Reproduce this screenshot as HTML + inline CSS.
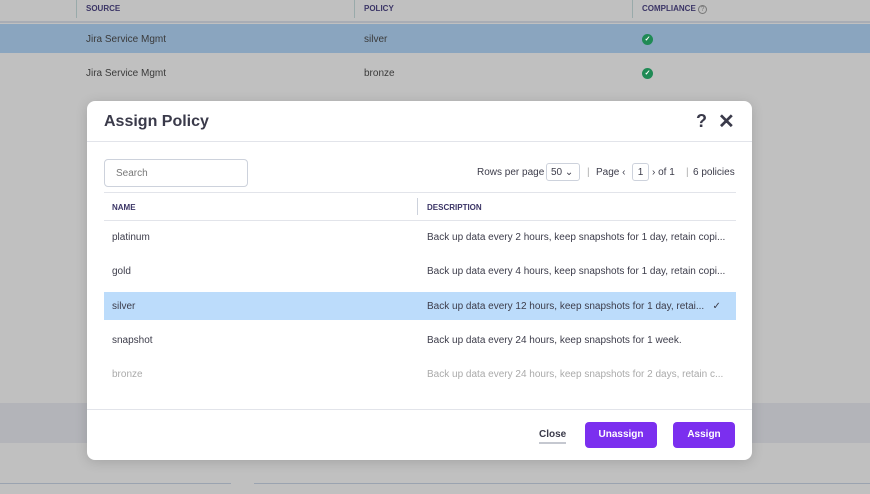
<!DOCTYPE html>
<html><head><style>
*{box-sizing:border-box;margin:0;padding:0}
body{width:870px;height:494px;background:#c0c0c0;font-family:"Liberation Sans",sans-serif;position:relative;overflow:hidden;color:#333}
.a{position:absolute}
.bg{font-size:10px;color:#3a3a3a}
.hd{font-size:8px;font-weight:bold;color:#3b3566}
.ok{width:11px;height:11px;border-radius:50%;background:#1f8a55;color:#fff;font-size:7px;text-align:center;line-height:11px;font-weight:bold}
.m{left:87px;top:101px;width:665px;height:359px;background:#fff;border-radius:8px;box-shadow:0 2px 12px rgba(0,0,0,.15)}
.t{font-size:10px;color:#3c3c4a}
.btn{background:#7b2fef;color:#fff;font-weight:bold;font-size:10px;border-radius:4px;text-align:center;line-height:26px;height:26px}
</style></head><body>
<div class="a" style="left:76px;top:0;width:1px;height:18px;background:#9aa"></div>
<div class="a" style="left:354px;top:0;width:1px;height:18px;background:#9aa"></div>
<div class="a" style="left:632px;top:0;width:1px;height:18px;background:#9aa"></div>
<div class="a hd" style="left:86px;top:4px">SOURCE</div>
<div class="a hd" style="left:364px;top:4px">POLICY</div>
<div class="a hd" style="left:642px;top:4px">COMPLIANCE <span style="font-weight:normal;border:1px solid #777;border-radius:50%;display:inline-block;width:9px;height:9px;font-size:7px;text-align:center;line-height:8px;color:#777">?</span></div>
<div class="a" style="left:0;top:21px;width:870px;height:2px;background:#a9adb5"></div>
<div class="a" style="left:0;top:24px;width:870px;height:29px;background:#8aa5bf"></div>
<div class="a bg" style="left:86px;top:34px">Jira Service Mgmt</div>
<div class="a bg" style="left:364px;top:34px">silver</div>
<div class="a ok" style="left:642px;top:34px">✓</div>
<div class="a bg" style="left:86px;top:68px">Jira Service Mgmt</div>
<div class="a bg" style="left:364px;top:68px">bronze</div>
<div class="a ok" style="left:642px;top:68px">✓</div>
<div class="a" style="left:0;top:403px;width:870px;height:40px;background:#b3b4b9"></div>
<div class="a" style="left:0;top:483px;width:231px;height:1px;background:#9aa3b0"></div>
<div class="a" style="left:254px;top:483px;width:616px;height:1px;background:#9aa3b0"></div>

<div class="a m">
 <div class="a" style="left:17px;top:12px;font-size:16px;font-weight:bold;color:#3a3a4a">Assign Policy</div>
 <div class="a" style="left:609px;top:10px;font-size:18px;font-weight:bold;color:#3a3a4a">?</div>
 <div class="a" style="left:631px;top:8px;font-size:20px;font-weight:bold;color:#3a3a4a">✕</div>
 <div class="a" style="left:0;top:40px;width:665px;height:1px;background:#e2e4ea"></div>
 <div class="a" style="left:17px;top:58px;width:144px;height:28px;border:1px solid #cdd2dc;border-radius:4px;font-size:10px;color:#777;padding:8px 11px">Search</div>
 <div class="a t" style="left:390px;top:66px">Rows per page</div>
 <div class="a t" style="left:459px;top:62px;width:34px;height:18px;border:1px solid #cdd2dc;border-radius:3px;padding:3px 4px">50 ⌄</div>
 <div class="a t" style="left:500px;top:66px;color:#aaa">|</div>
 <div class="a t" style="left:509px;top:66px">Page ‹</div>
 <div class="a t" style="left:545px;top:62px;width:17px;height:18px;border:1px solid #cdd2dc;border-radius:3px;text-align:center;padding-top:3px">1</div>
 <div class="a t" style="left:565px;top:66px">› of 1</div>
 <div class="a t" style="left:599px;top:66px;color:#aaa">|</div>
 <div class="a t" style="left:606px;top:66px">6 policies</div>
 <div class="a" style="left:17px;top:91px;width:632px;height:1px;background:#e2e4ea"></div>
 <div class="a" style="left:330px;top:97px;width:1px;height:17px;background:#cdd2dc"></div>
 <div class="a hd" style="left:25px;top:102px">NAME</div>
 <div class="a hd" style="left:340px;top:102px">DESCRIPTION</div>
 <div class="a" style="left:17px;top:119px;width:632px;height:1px;background:#e2e4ea"></div>
 <div class="a t" style="left:25px;top:131px">platinum</div>
 <div class="a t" style="left:340px;top:131px">Back up data every 2 hours, keep snapshots for 1 day, retain copi...</div>
 <div class="a t" style="left:25px;top:165px">gold</div>
 <div class="a t" style="left:340px;top:165px">Back up data every 4 hours, keep snapshots for 1 day, retain copi...</div>
 <div class="a" style="left:17px;top:191px;width:632px;height:28px;background:#bcdcfb"></div>
 <div class="a t" style="left:25px;top:200px">silver</div>
 <div class="a t" style="left:340px;top:200px">Back up data every 12 hours, keep snapshots for 1 day, retai... &nbsp;&nbsp;✓</div>
 <div class="a t" style="left:25px;top:234px">snapshot</div>
 <div class="a t" style="left:340px;top:234px">Back up data every 24 hours, keep snapshots for 1 week.</div>
 <div class="a t" style="left:25px;top:268px;color:#aaa">bronze</div>
 <div class="a t" style="left:340px;top:268px;color:#aaa">Back up data every 24 hours, keep snapshots for 2 days, retain c...</div>
 <div class="a" style="left:0;top:308px;width:665px;height:1px;background:#e2e4ea"></div>
 <div class="a" style="left:452px;top:328px;font-size:10px;font-weight:bold;color:#3a3a4a;border-bottom:2px solid #c5c8d0;padding-bottom:2px">Close</div>
 <div class="a btn" style="left:498px;top:321px;width:72px">Unassign</div>
 <div class="a btn" style="left:586px;top:321px;width:62px">Assign</div>
</div>
</body></html>
